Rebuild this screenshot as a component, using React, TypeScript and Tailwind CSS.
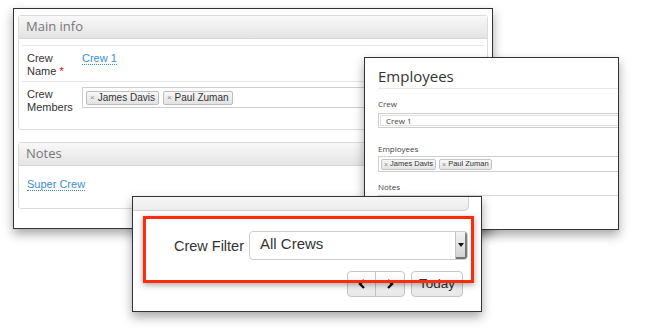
const sans = "font-['Liberation_Sans',Arial,sans-serif]"
const open = "font-['Open_Sans','Liberation_Sans',sans-serif]"

function Tag({ label, small }: { label: string; small?: boolean }) {
  return (
    <span
      className={
        small
          ? 'inline-flex items-center h-[11px] px-[2px] gap-[2px] border border-[#c4c4c4] rounded-[2px] bg-gradient-to-b from-[#f8f8f8] to-[#e4e4e4] text-[7.5px] text-[#333] leading-none'
          : 'inline-flex items-center h-[14px] px-[3px] gap-[3px] border border-[#bdbdbd] rounded-[2px] bg-gradient-to-b from-[#f8f8f8] to-[#e2e2e2] text-[10px] text-[#333] leading-none'
      }
    >
      <span className={small ? 'text-[7px] text-[#888]' : 'text-[8px] text-[#888]'}>×</span>
      {label}
    </span>
  )
}

function PanelHeader({ title }: { title: string }) {
  return (
    <div className={`h-[23px] flex items-center px-[7px] bg-gradient-to-b from-[#f8f8f8] to-[#e4e4e4] border-b border-[#d6d6d6] text-[13px] text-[#777] ${open}`}>
      {title}
    </div>
  )
}

function Chevron({ dir }: { dir: 'left' | 'right' }) {
  return (
    <svg width="8" height="10" viewBox="0 0 8 10">
      <polyline
        points={dir === 'left' ? '6,1 2,5 6,9' : '2,1 6,5 2,9'}
        fill="none"
        stroke="#111"
        strokeWidth="2.4"
      />
    </svg>
  )
}

export default function App() {
  return (
    <div className={`relative w-[650px] h-[330px] bg-white overflow-hidden ${sans}`}>
      {/* Main info window */}
      <div className="absolute left-[13px] top-[8px] w-[480px] h-[221px] border border-[#333] bg-white shadow-[0_5px_10px_rgba(0,0,0,0.35)] px-[4px] pt-[6px]">
        <div className="border border-[#dcdcdc] rounded-[3px] bg-white">
          <PanelHeader title="Main info" />
          <div className="px-[3px] pt-[6px]">
            <div className="flex h-[36px] border-t border-[#e6e6e6] pt-[6px]">
              <div className="w-[60px] pl-[5px] text-[11px] leading-[13px] text-[#333]">
                Crew
                <br />
                Name <span className="text-[#d00]">*</span>
              </div>
              <div className="text-[11px] leading-[13px]">
                <span className="text-[#3b8fd6] border-b border-dotted border-[#3b8fd6]">Crew 1</span>
              </div>
            </div>
            <div className="flex h-[48px] border-t border-[#e6e6e6] pt-[5px]">
              <div className="w-[60px] pl-[5px] pt-[1px] text-[11px] leading-[13px] text-[#333]">
                Crew
                <br />
                Members
              </div>
              <div className="flex-1 h-[21px] border border-[#cfcfcf] flex items-center gap-[4px] pl-[3px]">
                <Tag label="James Davis" />
                <Tag label="Paul Zuman" />
              </div>
            </div>
          </div>
        </div>

        <div className="mt-[12px] border border-[#dcdcdc] rounded-[3px] bg-white h-[67px]">
          <PanelHeader title="Notes" />
          <div className="pl-[8px] pt-[12px] text-[11px] leading-[13px]">
            <span className="text-[#3b8fd6] border-b border-dotted border-[#3b8fd6]">Super Crew</span>
          </div>
        </div>
      </div>

      {/* Employees window */}
      <div className={`absolute left-[364px] top-[57px] w-[255px] h-[173px] border border-[#333] bg-white shadow-[0_5px_10px_rgba(0,0,0,0.35)] overflow-hidden pl-[13px] pt-[8px] ${open}`}>
        <div className="w-[300px]">
          <div className="text-[15px] leading-[20px] text-[#333]">Employees</div>
          <div className="mt-[2px] border-t border-[#e8e8e8]" />
          <div className="mt-[10px] text-[8px] leading-[10px] text-[#444]">Crew</div>
          <div className="mt-[4px] h-[15px] border border-[#cfcfcf] p-[1px]">
            <div className="h-full border border-[#e0e0e0] pl-[5px] flex items-center text-[8px] text-[#444]">Crew 1</div>
          </div>
          <div className="mt-[16px] text-[8px] leading-[10px] text-[#444]">Employees</div>
          <div className={`mt-[2px] h-[16px] border border-[#cfcfcf] flex items-center gap-[3px] pl-[2px] ${sans}`}>
            <Tag label="James Davis" small />
            <Tag label="Paul Zuman" small />
          </div>
          <div className="mt-[10px] text-[8px] leading-[10px] text-[#444]">Notes</div>
          <div className="mt-[3px] h-[40px] border border-[#dcdcdc]" />
        </div>
      </div>

      {/* Crew filter window */}
      <div className="absolute left-[132px] top-[196px] w-[350px] h-[116px] border border-[#333] bg-white shadow-[0_5px_10px_rgba(0,0,0,0.35)]">
        <div className="mr-[12px] h-[14px] bg-gradient-to-b from-[#f6f6f6] to-[#ececec] border-r border-b border-[#cfcfcf] rounded-br-[5px]" />
        <div className="mt-[20px] flex items-center justify-end gap-[5px] pr-[13px]">
          <span className="text-[14.5px] text-[#333] pt-[2px]">Crew Filter</span>
          <div className="w-[219px] h-[29px] border border-[#cdcdcd] rounded-[4px] flex items-center justify-between overflow-hidden">
            <span className="pl-[10px] text-[15px] text-[#333] pb-[2px]">All Crews</span>
            <div className="w-[12px] h-full bg-gradient-to-b from-[#f4f4f4] to-[#cfcfcf] border-l border-[#c4c4c4] shadow-[inset_-2px_-2px_0_rgba(0,0,0,0.45)] flex items-center justify-center">
              <svg width="6" height="4" viewBox="0 0 6 4" className="mb-[2px] mr-[1px]">
                <polygon points="0,0 6,0 3,4" fill="#111" />
              </svg>
            </div>
          </div>
        </div>
        <div className="mt-[11px] flex justify-end gap-[6px] pr-[18px]">
          <div className="flex h-[26px] border border-[#c4c4c4] rounded-[4px] bg-gradient-to-b from-white to-[#e8e8e8]">
            <div className="w-[28px] flex items-center justify-center border-r border-[#c4c4c4]">
              <Chevron dir="left" />
            </div>
            <div className="w-[28px] flex items-center justify-center">
              <Chevron dir="right" />
            </div>
          </div>
          <div className="w-[52px] h-[26px] border border-[#c4c4c4] rounded-[4px] bg-gradient-to-b from-white to-[#e8e8e8] flex items-center justify-center text-[13.5px] text-[#333]">
            Today
          </div>
        </div>

        {/* highlight */}
        <div className="absolute left-[10px] top-[19px] w-[331px] h-[67px] border-[3px] border-[#ff2b0a] shadow-[0_2px_6px_rgba(0,0,0,0.35)]" />
      </div>
    </div>
  )
}
